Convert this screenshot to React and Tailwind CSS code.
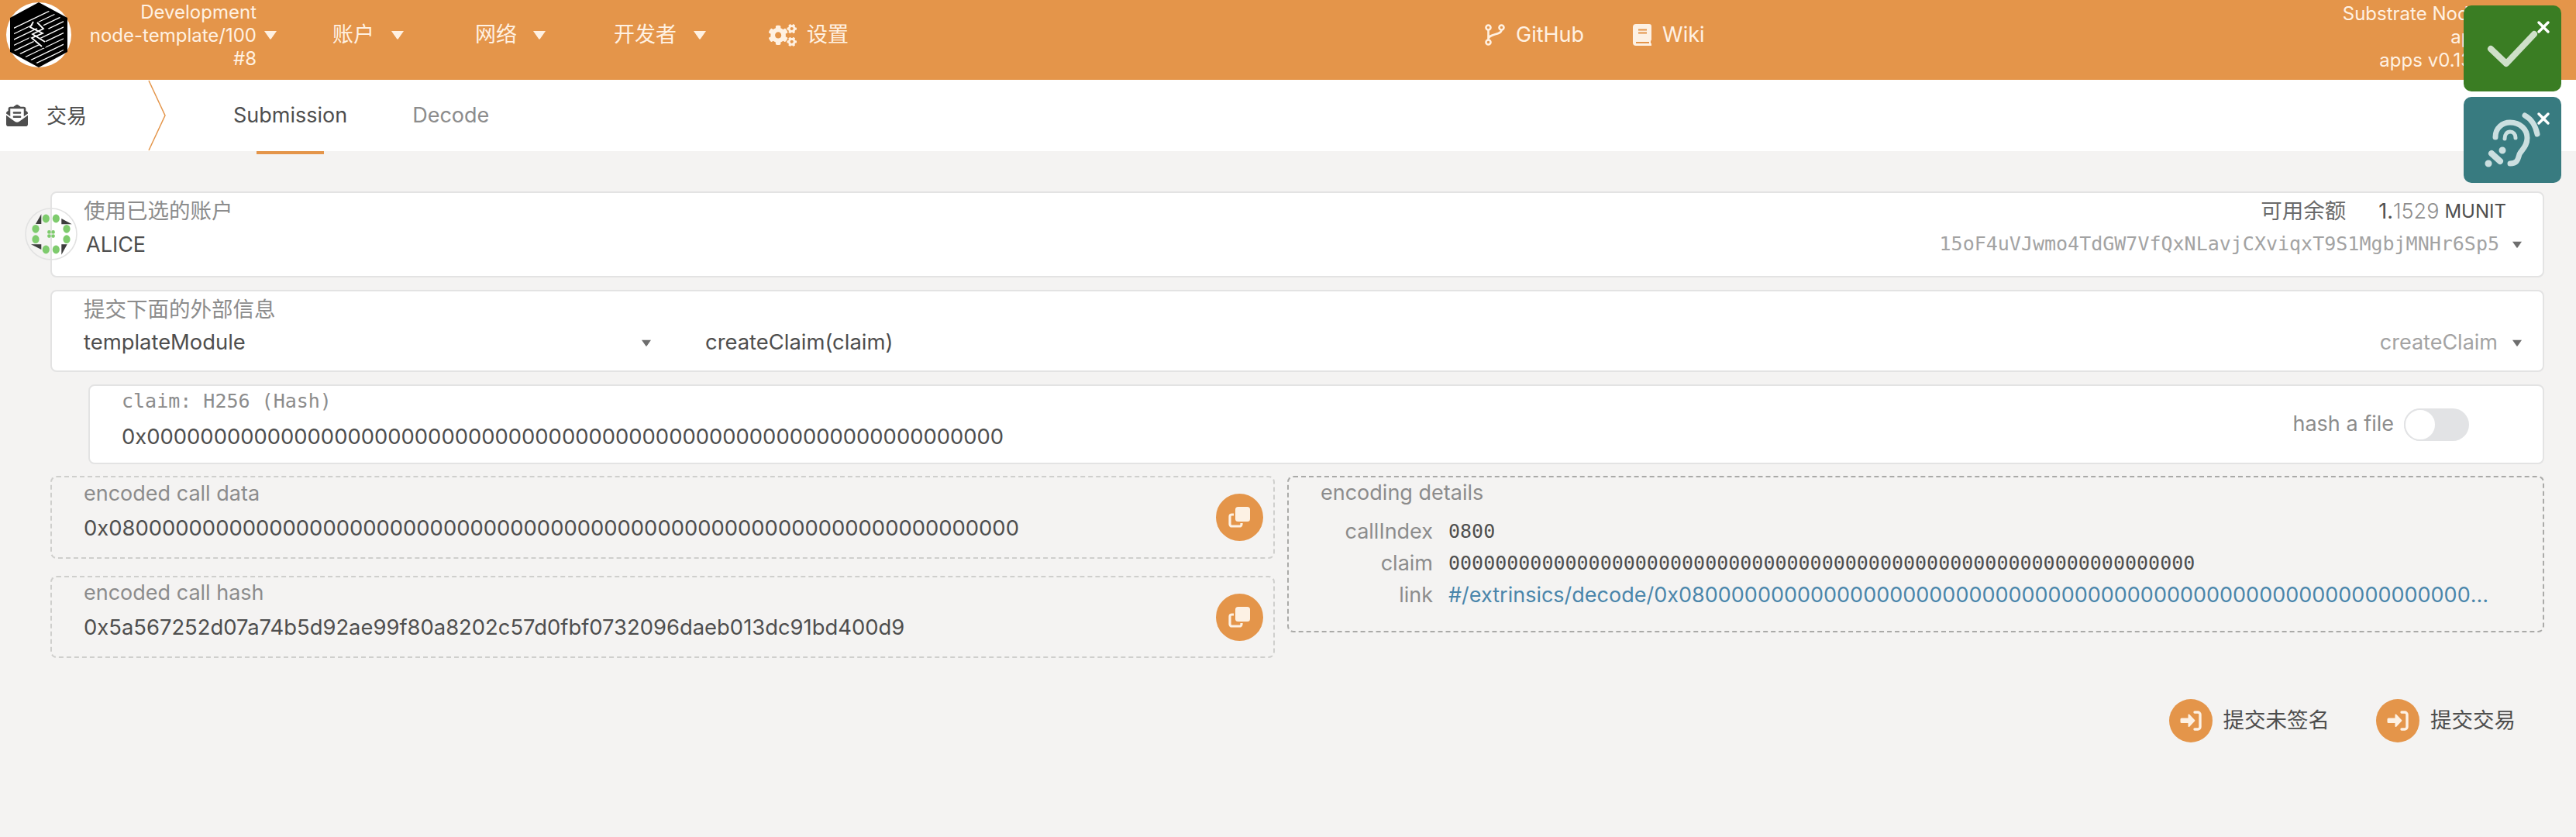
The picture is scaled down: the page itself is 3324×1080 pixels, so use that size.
import React from 'react';
import { FaCogs, FaEnvelopeOpenText } from 'react-icons/fa';

const sans = 'font-["Inter","Noto_Sans_CJK_SC",sans-serif]';
const mono = 'font-["DejaVu_Sans_Mono",monospace]';

const ZEROS = '0'.repeat(64);

function Caret({ className }) {
  return (
    <svg viewBox="0 0 18 12" className={className} fill="currentColor">
      <path d="M1 1h16l-7 10a1.2 1.2 0 0 1-2 0z" />
    </svg>
  );
}

function Logo() {
  const lines = [];
  for (let i = 0; i < 14; i++) {
    lines.push(<line key={i} x1="0" y1={38 + i * 7.4} x2="100" y2={-10 + i * 7.4} />);
  }
  return (
    <svg viewBox="0 0 84 84" className="w-[84px] h-[84px] shrink-0">
      <defs>
        <clipPath id="hex">
          <path d="M42 4 74 22V62L42 80 10 62V22z" />
        </clipPath>
      </defs>
      <circle cx="42" cy="42" r="42" fill="#fff" />
      <path d="M42 0 79 20V64L42 84 5 64V20z" fill="#000" />
      <g clipPath="url(#hex)" stroke="#fff" strokeWidth="1.3">{lines}</g>
      <path d="M36 26 50 36 36 46 52 56" fill="none" stroke="#000" strokeWidth="8" />
      <path d="M35 25 31 32 47 40 33 46 46 57M40 26 48 34 34 41 50 51" fill="none" stroke="#fff" strokeWidth="1.8" />
    </svg>
  );
}

function Identicon() {
  const dots = [[-6.7, -20], [6.3, -20], [-20, -6.7], [20, -6.7], [-20, 6.7], [20, 6.7], [-6.7, 20], [6.3, 20]];
  return (
    <svg viewBox="-34 -34 68 68" className="w-[68px] h-[68px]">
      <circle r="33" fill="none" stroke="#e2e2e2" strokeWidth="1.6" />
      {dots.map(([x, y]) => (
        <ellipse key={x + '-' + y} cx={x} cy={y} rx="4.6" ry="5.4" fill="#7ecb6d" />
      ))}
      <path d="M-20-13-12.7-25.7V-13zM13.3-20 26.7-12.7H13.3zM13.3 26.7 20.7 13.3H13.3zM-26 13.3-12.7 20V13.3z" fill="#3d3d3d" />
      <g fill="#7ecb6d">
        <circle cx="-2.6" cy="-2.6" r="2.3" />
        <circle cx="2.6" cy="-2.6" r="2.3" />
        <circle cx="-2.6" cy="2.6" r="2.3" />
        <circle cx="2.6" cy="2.6" r="2.3" />
      </g>
    </svg>
  );
}

function NavMenu({ label, gap }) {
  return (
    <div className={`flex items-center ${gap}`}>
      <span className="text-[27px]">{label}</span>
      <Caret className="w-[18px] h-[12px] text-[#fff1e2]" />
    </div>
  );
}

function CopyButton() {
  return (
    <svg viewBox="0 0 61 61" className="w-[61px] h-[61px] shrink-0">
      <circle cx="30.5" cy="30.5" r="30.5" fill="#e4954a" />
      <rect x="25" y="17" width="19" height="19" rx="3.5" fill="#fdf1e4" />
      <path d="M23 27H20.5a2.5 2.5 0 0 0-2.500 2.500V39.500a2.500 2.500 0 0 0 2.500 2.500H30.500a2.500 2.500 0 0 0 2.500-2.500V38" fill="none" stroke="#fdf1e4" strokeWidth="3.2" />
    </svg>
  );
}

function SubmitIcon() {
  return (
    <svg viewBox="0 0 56 56" className="w-[56px] h-[56px] shrink-0">
      <circle cx="28" cy="28" r="28" fill="#e4954a" />
      <path d="M16 24.500H24.500V20.500a1 1 0 0 1 1.700-.7L33 27a1 1 0 0 1 0 1.500L26.200 35.700a1 1 0 0 1-1.700-.7V31H16a1.500 1.500 0 0 1-1.500-1.500V26a1.500 1.500 0 0 1 1.500-1.500z" fill="#fdf1e4" />
      <path d="M33 17H37a3 3 0 0 1 3 3V36a3 3 0 0 1-3 3H33" fill="none" stroke="#fdf1e4" strokeWidth="3.4" strokeLinecap="round" />
    </svg>
  );
}

function BranchIcon() {
  return (
    <svg viewBox="0 0 26 28" className="w-[26px] h-[28px]" fill="none" stroke="currentColor" strokeWidth="2.6">
      <circle cx="4.500" cy="4.500" r="3" />
      <circle cx="21.500" cy="4.500" r="3" />
      <circle cx="4.500" cy="23.500" r="3" />
      <path d="M4.500 7.500V20.500M21.500 7.500C21.500 15 4.500 11.500 4.500 20" />
    </svg>
  );
}

function BookIcon() {
  return (
    <svg viewBox="0 0 24 28" className="w-[24px] h-[28px]">
      <path d="M4 0H21a3 3 0 0 1 3 3V20a2 2 0 0 1-1 1.700V25a1.500 1.500 0 0 1 1 3H4a4 4 0 0 1-4-4V4a4 4 0 0 1 4-4z" fill="#fdf1e4" />
      <path d="M7 7.500H18M7 11.500H18M4 24H21" stroke="#e4954a" strokeWidth="1.800" />
    </svg>
  );
}

function Toast({ color, children }) {
  return (
    <div className={`relative w-[126px] h-[111px] rounded-[10px] ${color}`}>
      <svg viewBox="0 0 126 111" className="w-full h-full" fill="none" strokeLinecap="round" strokeLinejoin="round">
        {children}
        <path d="M97 22 109 34M109 22 97 34" stroke="#fff" strokeWidth="3.5" />
      </svg>
    </div>
  );
}

export default function App() {
  return (
    <div className={`relative min-h-[1080px] w-full bg-[#f4f3f2] text-[#4e4e4e] ${sans}`}>
      {/* top bar */}
      <header className="flex items-center h-[103px] pb-[13px] bg-[#e4954a] text-[#fff1e2]">
        <div className="flex items-center w-[429px] pl-[8px]">
          <Logo />
          <div className="w-[239px] text-right text-[24px] leading-[30px] pt-[2px]">
            <div>Development</div>
            <div>node-template/100</div>
            <div>#8</div>
          </div>
          <Caret className="ml-[9px] w-[18px] h-[12px] text-[#fff1e2]" />
        </div>
        <NavMenu label="账户" gap="gap-[21px]" />
        <div className="w-[91px]" />
        <NavMenu label="网络" gap="gap-[20px]" />
        <div className="w-[87px]" />
        <NavMenu label="开发者" gap="gap-[21px]" />
        <div className="w-[80px]" />
        <div className="flex items-center gap-[13px]">
          <FaCogs className="w-[36px] h-[29px]" />
          <span className="text-[27px]">设置</span>
        </div>
        <div className="w-[821px]" />
        <div className="flex items-center gap-[14px] text-[27px]">
          <BranchIcon />
          <span>GitHub</span>
        </div>
        <div className="w-[63px]" />
        <div className="flex items-center gap-[14px] text-[27px]">
          <BookIcon />
          <span>Wiki</span>
        </div>
        <div className="ml-auto pr-[24px] pt-[6px] text-right text-[24px] leading-[30px] whitespace-nowrap">
          <div>Substrate Node 3.0.0-xy</div>
          <div>api v14.12.10</div>
          <div>apps v0.132.1-45012</div>
        </div>
      </header>

      {/* tabs */}
      <nav className="flex items-stretch h-[92px] bg-white">
        <div className="relative flex items-center w-[301px] pl-[8px] text-[26px]">
          <FaEnvelopeOpenText className="w-[28px] h-[28px]" />
          <span className="ml-[24px]">交易</span>
          <svg viewBox="0 0 24 92" className="absolute left-[190px] top-0 w-[24px] h-[92px]" fill="none">
            <path d="M2 1 23 46 2 91" stroke="#e4954a" strokeWidth="1.5" />
          </svg>
        </div>
        <div className="flex items-center gap-[84px] text-[27px]">
          <div className="relative flex items-center h-full">
            <span>Submission</span>
            <span className="absolute left-[30px] top-[92px] w-[87px] h-[4px] bg-[#e4954a]" />
          </div>
          <span className="text-[#8c8c8c]">Decode</span>
        </div>
      </nav>

      <main className="pt-[52px] pl-[65px] pr-[41px]">
        {/* account */}
        <section className="relative h-[111px] rounded-[8px] border-2 border-[#e3e3e3] bg-white pl-[41px] pr-[26px] pt-[6px]">
          <div className="absolute -left-[35px] top-[19px]">
            <Identicon />
          </div>
          <div className="flex items-center justify-between h-[36px]">
            <span className="text-[27.5px] text-[#8c8c8c]">使用已选的账户</span>
            <div className="flex items-center pr-[21px]">
              <span className="text-[27.5px] text-[#6a6a6a]">可用余额</span>
              <span className="ml-[42px] text-[27px]">1.</span>
              <span className="text-[27px] font-light text-[#8c8c8c]">1529</span>
              <span className="ml-[7px] text-[24px]">MUNIT</span>
            </div>
          </div>
          <div className="flex items-center justify-between h-[44px] mt-[2px]">
            <span className="pl-[3px] pt-[3px] text-[27px]">ALICE</span>
            <div className="flex items-center gap-[16px]">
              <span className={`${mono} text-[25px] text-[#a3a3a3]`}>15oF4uVJwmo4TdGW7VfQxNLavjCXviqxT9S1MgbjMNHr6Sp5</span>
              <Caret className="w-[14px] h-[9px] text-[#6e6e6e]" />
            </div>
          </div>
        </section>

        {/* extrinsic */}
        <section className="mt-[16px] h-[106px] rounded-[8px] border-2 border-[#e3e3e3] bg-white pl-[41px] pr-[26px] pt-[6px]">
          <div className="h-[36px] flex items-center text-[27.5px] text-[#8c8c8c]">提交下面的外部信息</div>
          <div className="flex items-center h-[44px] mt-[2px]">
            <span className="w-[719px] text-[27.4px]">templateModule</span>
            <Caret className="w-[14px] h-[9px] text-[#6e6e6e]" />
            <span className="ml-[69px] text-[27.4px]">createClaim(claim)</span>
            <span className="ml-auto text-[27px] text-[#a3a3a3]">createClaim</span>
            <Caret className="ml-[18px] w-[14px] h-[9px] text-[#6e6e6e]" />
          </div>
        </section>

        {/* param */}
        <section className="ml-[49px] mt-[16px] h-[103px] rounded-[8px] border-2 border-[#e3e3e3] bg-white pl-[41px] pr-[95px] flex items-center justify-between">
          <div className="-mt-[11px]">
            <div className={`${mono} text-[25px] leading-[36px] text-[#8c8c8c]`}>claim: H256 (Hash)</div>
            <div className="mt-[5px] text-[27.4px] leading-[44px]">0x{ZEROS}</div>
          </div>
          <div className="flex items-center gap-[13px]">
            <span className="text-[27px] text-[#8c8c8c]">hash a file</span>
            <span className="flex w-[84px] h-[42px] rounded-full bg-[#e2e3e5]">
              <span className="w-[42px] h-[42px] rounded-full bg-white border-2 border-[#e2e3e5]" />
            </span>
          </div>
        </section>

        {/* encoded */}
        <div className="mt-[15px] grid grid-cols-[1580px_1fr] gap-x-[16px]">
          <div className="flex flex-col gap-[22px]">
            <div className="flex items-center justify-between h-[107px] rounded-[8px] border-2 border-dashed border-[#cfcfcd] pl-[41px] pr-[13px]">
              <div className="-mt-[16px]">
                <div className="text-[27px] leading-[36px] text-[#8c8c8c]">encoded call data</div>
                <div className="mt-[6px] text-[27.4px] leading-[40px]">0x0800{ZEROS}</div>
              </div>
              <CopyButton />
            </div>
            <div className="flex items-center justify-between h-[106px] rounded-[8px] border-2 border-dashed border-[#cfcfcd] pl-[41px] pr-[13px]">
              <div className="-mt-[16px]">
                <div className="text-[27px] leading-[36px] text-[#8c8c8c]">encoded call hash</div>
                <div className="mt-[6px] text-[27.4px] leading-[40px]">0x5a567252d07a74b5d92ae99f80a8202c57d0fbf0732096daeb013dc91bd400d9</div>
              </div>
              <CopyButton />
            </div>
          </div>
          <div className="self-start h-[202px] rounded-[8px] border-2 border-dashed border-[#aaaaa8] pl-[41px] pr-[66px] pt-[2px]">
            <div className="text-[27px] leading-[36px] text-[#8c8c8c]">encoding details</div>
            <div className="mt-[11px] grid grid-cols-[145px_1fr] gap-x-[20px] text-[27px] leading-[41px]">
              <span className="text-right text-[#8c8c8c]">callIndex</span>
              <span className={`${mono} text-[25px]`}>0800</span>
              <span className="text-right text-[#8c8c8c]">claim</span>
              <span className={`${mono} text-[25px]`}>{ZEROS}</span>
              <span className="text-right text-[#8c8c8c]">link</span>
              <span className="truncate text-[#4a86ab]">#/extrinsics/decode/0x0800{ZEROS}</span>
            </div>
          </div>
        </div>

        {/* actions */}
        <div className="mt-[53px] flex justify-end gap-[60px] pr-[37px]">
          <div className="flex items-center gap-[14px]">
            <SubmitIcon />
            <span className="text-[27.5px]">提交未签名</span>
          </div>
          <div className="flex items-center gap-[14px]">
            <SubmitIcon />
            <span className="text-[27.5px]">提交交易</span>
          </div>
        </div>
      </main>

      {/* status toasts */}
      <div className="absolute right-[19px] top-[7px] flex flex-col gap-[7px]">
        <Toast color="bg-[#3a7d23]">
          <path d="M35 56 55 75 91 37" stroke="#cfe0c9" strokeWidth="8" />
        </Toast>
        <Toast color="bg-[#387b80]">
          <g stroke="#cbdfe0">
            <path d="M41 52C41 40 50 33 60 33C73 33 82 42 82 53C82 64 75 68 72 74C70 80 70 86 60 86" strokeWidth="7" />
            <path d="M53 54C53 48 56 45 60 45C64 45 67 48 67 53" strokeWidth="5" />
            <path d="M79 24C88 29 93 38 95 48" strokeWidth="7" />
            <path d="M36 73 47 83" strokeWidth="8" />
            <path d="M50 69h.01M32 86h.01" strokeWidth="9" />
          </g>
        </Toast>
      </div>
    </div>
  );
}
